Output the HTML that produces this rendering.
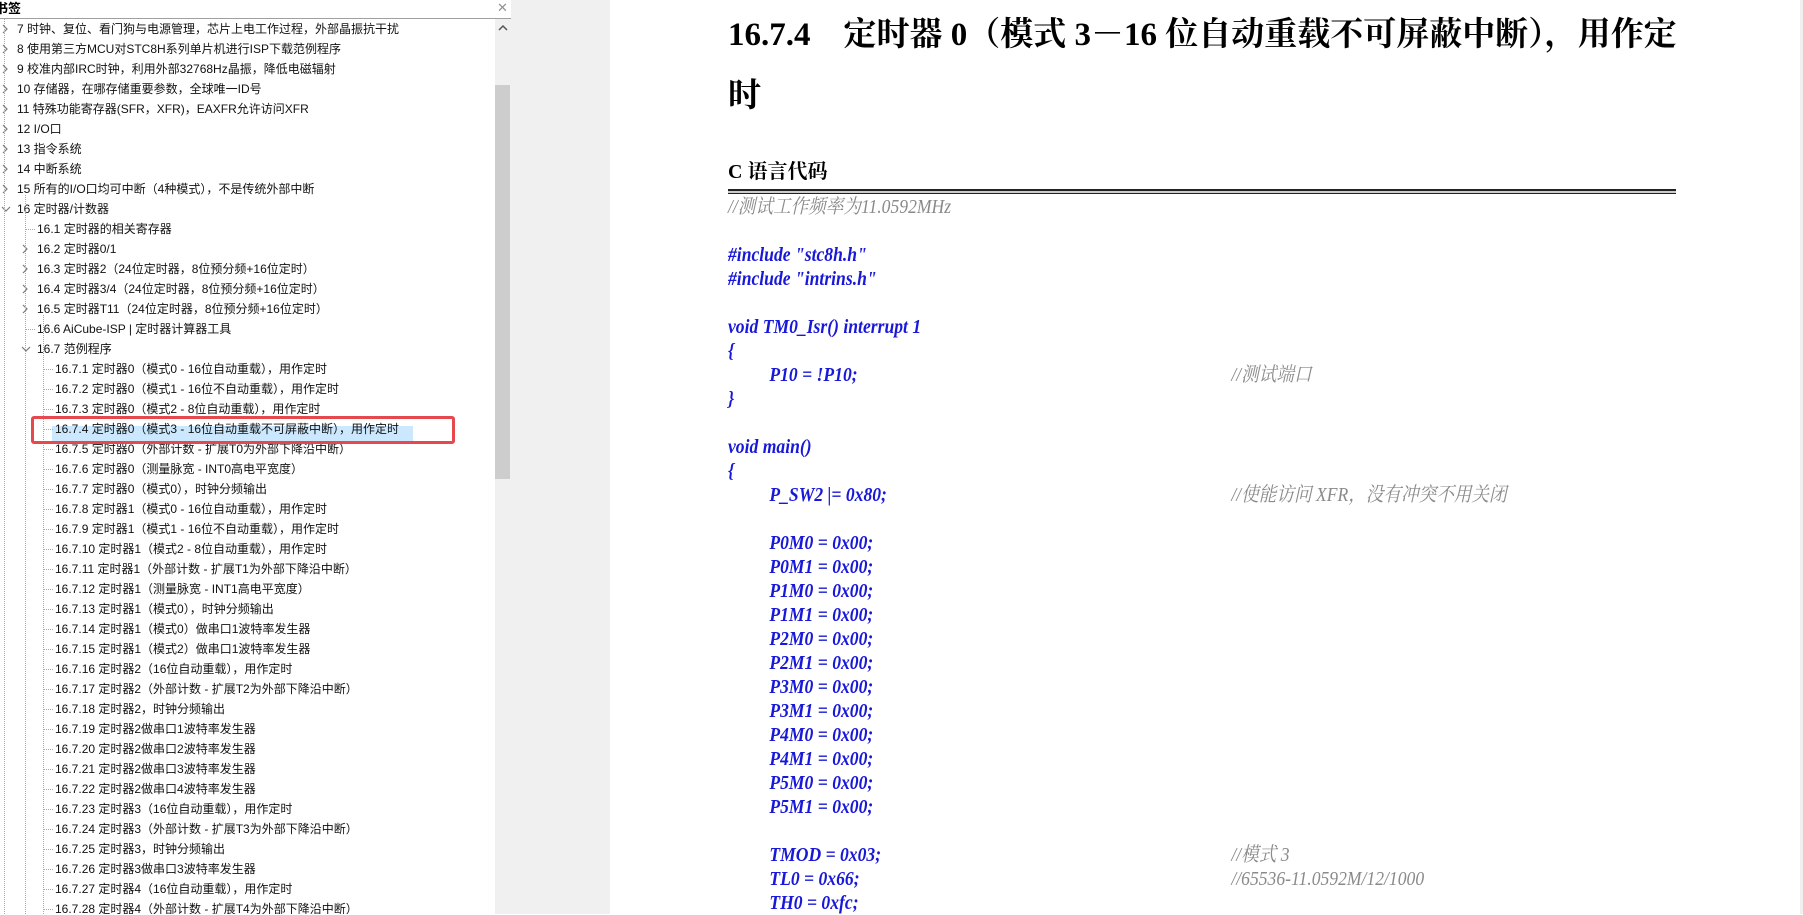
<!DOCTYPE html>
<html><head><meta charset="utf-8">
<style>
*{margin:0;padding:0;box-sizing:border-box}
body{width:1803px;height:914px;overflow:hidden;background:#fff;position:relative;font-family:"Liberation Sans","Noto Sans CJK SC",sans-serif}
#left{position:absolute;left:0;top:0;width:511px;height:914px;background:#fff;overflow:hidden}
#hdr{position:absolute;left:-5px;top:0;font-size:13px;font-weight:bold;color:#000;line-height:17px}
#hline{position:absolute;left:0;top:18px;width:511px;height:1px;background:#a0a0a0}
#close{position:absolute;left:497px;top:0;font-size:13px;color:#909090;line-height:16px}
.r{position:absolute;height:20px;line-height:20px;font-size:12px;color:#111;white-space:nowrap}
.vl{position:absolute;border-left:1px dotted #a8a8a8;width:0}
.hl{position:absolute;border-top:1px dotted #a8a8a8;height:0}
.ar{position:absolute;width:8px;height:10px}
#sb{position:absolute;left:495px;top:19px;width:16px;height:895px;background:#f0f0f0}
#thumb{position:absolute;left:495px;top:85px;width:15px;height:394px;background:#cdcdcd}
#gray{position:absolute;left:511px;top:0;width:99px;height:914px;background:#f0f0f0}
#rgray{position:absolute;left:1800px;top:0;width:3px;height:914px;background:#f0f0f0}
.sel{position:absolute;left:52px;top:426px;width:361px;height:18px;background:#cce8ff}
.box{position:absolute;left:31px;top:416px;width:424px;height:28px;border:3px solid #e5484d;border-radius:3px}
#doc{position:absolute;left:728px;top:0}
.h1{position:absolute;left:0;white-space:nowrap;font-family:"Liberation Serif","Noto Serif CJK SC",serif;font-weight:bold;font-size:33px;color:#000;line-height:40px}
.h2{position:absolute;left:0;top:158px;font-family:"Liberation Serif","Noto Serif CJK SC",serif;font-weight:bold;font-size:20px;line-height:28px;white-space:nowrap}
.dl{position:absolute;left:0;top:189px;width:948px;height:5px;border-top:2px solid #222;border-bottom:1px solid #222;background:#ccc}
#code{position:absolute;left:0;top:0;transform:scaleX(0.88);transform-origin:0 0}
.c{position:absolute;left:0;white-space:nowrap;font-family:"Liberation Serif","Noto Serif CJK SC",serif;font-style:italic;font-weight:bold;font-size:20px;line-height:24px;color:#1818d8}
.i{left:47px}
.cm{position:absolute;left:572px;white-space:nowrap;font-family:"Liberation Serif","Noto Serif CJK SC",serif;font-style:italic;font-size:20px;line-height:24px;color:#8a8a8a}
</style></head><body>
<div id="left">
<div id="hdr">书签</div>
<div id="close">✕</div>
<div id="hline"></div>
<div class="sel"></div>
<div id="tree"></div>
<div class="vl" style="left:4px;top:19px;height:895px"></div>
<div class="vl" style="left:25px;top:195px;height:719px"></div>
<div class="vl" style="left:43px;top:315px;height:599px"></div>
<div id="sb"></div>
<div id="thumb"></div>
<svg style="position:absolute;left:498px;top:24px" width="10" height="8"><path d="M1 6 L5 2 L9 6" stroke="#555" stroke-width="1.5" fill="none"/></svg>
<div class="box"></div>
</div>
<div id="gray"></div>
<div id="rgray"></div>
<div id="doc">
<div class="h1" style="top:15px">16.7.4&nbsp;&nbsp;&nbsp; 定时器 0（模式 3－16 位自动重载不可屏蔽中断），用作定</div>
<div class="h1" style="top:76px">时</div>
<div class="h2">C 语言代码</div>
<div class="dl"></div>
<div id="code"></div>
</div>
<script>
var rows=[
[0,'>','7 时钟、复位、看门狗与电源管理，芯片上电工作过程，外部晶振抗干扰'],
[0,'>','8 使用第三方MCU对STC8H系列单片机进行ISP下载范例程序'],
[0,'>','9 校准内部IRC时钟，利用外部32768Hz晶振，降低电磁辐射'],
[0,'>','10 存储器，在哪存储重要参数，全球唯一ID号'],
[0,'>','11 特殊功能寄存器(SFR，XFR)，EAXFR允许访问XFR'],
[0,'>','12 I/O口'],
[0,'>','13 指令系统'],
[0,'>','14 中断系统'],
[0,'>','15 所有的I/O口均可中断（4种模式），不是传统外部中断'],
[0,'v','16 定时器/计数器'],
[1,'','16.1 定时器的相关寄存器'],
[1,'>','16.2 定时器0/1'],
[1,'>','16.3 定时器2（24位定时器，8位预分频+16位定时）'],
[1,'>','16.4 定时器3/4（24位定时器，8位预分频+16位定时）'],
[1,'>','16.5 定时器T11（24位定时器，8位预分频+16位定时）'],
[1,'','16.6 AiCube-ISP | 定时器计算器工具'],
[1,'v','16.7 范例程序']];
var l2=['定时器0（模式0 - 16位自动重载），用作定时','定时器0（模式1 - 16位不自动重载），用作定时','定时器0（模式2 - 8位自动重载），用作定时','定时器0（模式3 - 16位自动重载不可屏蔽中断），用作定时','定时器0（外部计数 - 扩展T0为外部下降沿中断）','定时器0（测量脉宽 - INT0高电平宽度）','定时器0（模式0），时钟分频输出','定时器1（模式0 - 16位自动重载），用作定时','定时器1（模式1 - 16位不自动重载），用作定时','定时器1（模式2 - 8位自动重载），用作定时','定时器1（外部计数 - 扩展T1为外部下降沿中断）','定时器1（测量脉宽 - INT1高电平宽度）','定时器1（模式0），时钟分频输出','定时器1（模式0）做串口1波特率发生器','定时器1（模式2）做串口1波特率发生器','定时器2（16位自动重载），用作定时','定时器2（外部计数 - 扩展T2为外部下降沿中断）','定时器2，时钟分频输出','定时器2做串口1波特率发生器','定时器2做串口2波特率发生器','定时器2做串口3波特率发生器','定时器2做串口4波特率发生器','定时器3（16位自动重载），用作定时','定时器3（外部计数 - 扩展T3为外部下降沿中断）','定时器3，时钟分频输出','定时器3做串口3波特率发生器','定时器4（16位自动重载），用作定时','定时器4（外部计数 - 扩展T4为外部下降沿中断）'];
l2.forEach(function(t,k){rows.push([2,'','16.7.'+(k+1)+' '+t]);});
var tx=[17,37,55],ax=[1,21,39],h='';
rows.forEach(function(r,i){
 var top=19+20*i;
 h+='<div class="r" style="left:'+tx[r[0]]+'px;top:'+top+'px">'+r[2]+'</div>';
 if(r[1]=='>')h+='<svg class="ar" style="left:'+ax[r[0]]+'px;top:'+(top+5)+'px" viewBox="0 0 8 10"><path d="M2 1 L6 5 L2 9" stroke="#7a7a7a" stroke-width="1.2" fill="none"/></svg>';
 else if(r[1]=='v')h+='<svg class="ar" style="left:'+ax[r[0]]+'px;top:'+(top+6)+'px;width:10px;height:8px" viewBox="0 0 10 8"><path d="M1 2 L5 6 L9 2" stroke="#7a7a7a" stroke-width="1.2" fill="none"/></svg>';
 else h+='<div class="hl" style="left:'+(tx[r[0]]-12)+'px;top:'+(top+10)+'px;width:10px"></div>';
});
document.getElementById('tree').innerHTML=h;
var code=[
['cm0','//测试工作频率为11.0592MHz'],[],
['c','#include "stc8h.h"'],['c','#include "intrins.h"'],[],
['c','void TM0_Isr() interrupt 1'],['c','{'],['i','P10 = !P10;','//测试端口'],['c','}'],[],
['c','void main()'],['c','{'],['i','P_SW2 |= 0x80;','//使能访问 XFR，没有冲突不用关闭'],[],
['i','P0M0 = 0x00;'],['i','P0M1 = 0x00;'],['i','P1M0 = 0x00;'],['i','P1M1 = 0x00;'],['i','P2M0 = 0x00;'],['i','P2M1 = 0x00;'],['i','P3M0 = 0x00;'],['i','P3M1 = 0x00;'],['i','P4M0 = 0x00;'],['i','P4M1 = 0x00;'],['i','P5M0 = 0x00;'],['i','P5M1 = 0x00;'],[],
['i','TMOD = 0x03;','//模式 3'],['i','TL0 = 0x66;','//65536-11.0592M/12/1000'],['i','TH0 = 0xfc;']];
var c='';
code.forEach(function(l,i){
 if(!l.length)return;var top=195+24*i;
 if(l[0]=='cm0')c+='<div class="cm" style="left:0;top:'+top+'px">'+l[1]+'</div>';
 else c+='<div class="c'+(l[0]=='i'?' i':'')+'" style="top:'+top+'px">'+l[1].replace(/</g,'&lt;')+'</div>';
 if(l[2])c+='<div class="cm" style="top:'+top+'px">'+l[2]+'</div>';
});
document.getElementById('code').innerHTML=c;
</script>
</body></html>
